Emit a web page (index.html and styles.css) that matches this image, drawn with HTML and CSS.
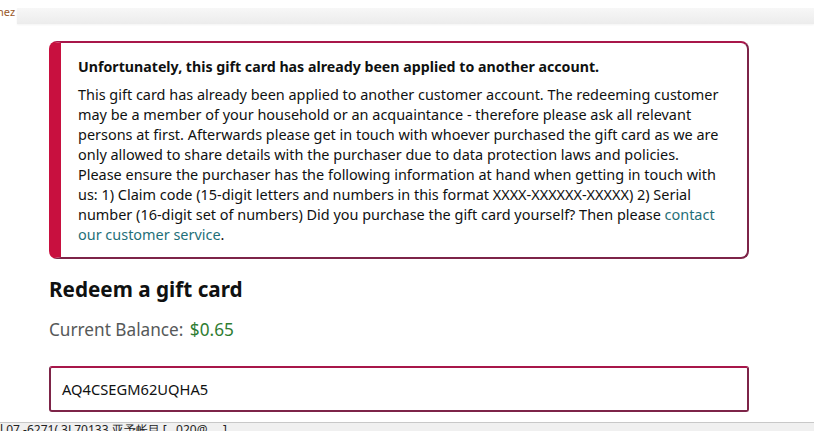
FILE: index.html
```html
<!DOCTYPE html>
<html>
<head>
<meta charset="utf-8">
<link rel="stylesheet" href="styles.css">
</head>
<body>
<div class="topbar">
  <span class="tab">nez</span>
  <div class="strip"></div>
</div>
<main class="main">
  <div class="alert">
    <div class="alert-inner">
      <h4 class="alert-title">Unfortunately, this gift card has already been applied to another account.</h4>
      <p class="alert-text">This gift card has already been applied to another customer account. The redeeming customer may be a member of your household or an acquaintance - therefore please ask all relevant persons at first. Afterwards please get in touch with whoever purchased the gift card as we are only allowed to share details with the purchaser due to data protection laws and policies. Please ensure the purchaser has the following information at hand when getting in touch with us: 1) Claim code (15-digit letters and numbers in this format XXXX-XXXXXX-XXXXX) 2) Serial number (16-digit set of numbers) Did you purchase the gift card yourself? Then please <a class="link" href="#">contact our customer service</a>.</p>
    </div>
  </div>
  <h2 class="heading">Redeem a gift card</h2>
  <div class="balance">Current Balance: <span class="amount">$0.65</span></div>
  <div class="input">AQ4CSEGM62UQHA5</div>
</main>
<div class="statusbar">l 07 -6271( 3L70133 亚予帐目 [ &nbsp; 020@ &nbsp; &nbsp; ]</div>
</body>
</html>
```

FILE: styles.css
```css
html, body {
  margin: 0;
  padding: 0;
  background: #fff;
  height: 431px;
  overflow: hidden;
  font-family: "Noto Sans", "Open Sans", sans-serif;
  color: #0f1111;
}
.topbar {
  height: 26px;
  position: relative;
  display: flex;
  align-items: flex-start;
}
.tab {
  font-size: 11px;
  color: #9a5a2a;
  padding-top: 5px;
  line-height: 14px;
  margin-left: -3px;
  width: 20px;
}
.strip {
  flex: 1;
  height: 16px;
  margin-top: 8px;
  background: linear-gradient(#f7f7f7, #ececec);
  box-shadow: 0 1px 2px rgba(0,0,0,0.05);
}
.main {
  padding: 15px 0 0 49px;
  width: 700px;
}
.alert {
  border: 2px solid #7d2448;
  border-top-color: #a8164a;
  border-left: 12px solid #c8103f;
  border-radius: 8px;
  box-sizing: border-box;
  width: 700px;
  height: 218px;
}
.alert-inner {
  padding: 14px 24px 0 17px;
}
.alert-title {
  margin: 0;
  font-size: 14.2px;
  font-weight: 700;
  line-height: 20px;
}
.alert-text {
  margin: 8px 0 0;
  font-size: 14.45px;
  line-height: 20px;
  color: #0f1111;
}
.link {
  color: #1f6f78;
  text-decoration: none;
}
.heading {
  margin: 16px 0 0;
  font-size: 20.7px;
  line-height: 28px;
  font-weight: 700;
}
.balance {
  margin-top: 15px;
  font-size: 17.2px;
  line-height: 24px;
  color: #565959;
}
.amount {
  color: #2f7d32;
  margin-left: 2px;
}
.input {
  margin-top: 24px;
  box-sizing: border-box;
  width: 700px;
  height: 46px;
  border: 2px solid #7d2448;
  border-top-color: #a8164a;
  border-radius: 3px;
  padding: 0 0 0 11px;
  display: flex;
  align-items: center;
  font-size: 14.7px;
}
.statusbar {
  position: absolute;
  left: 0;
  top: 422px;
  width: 814px;
  height: 20px;
  background: #f0f0f0;
  border-top: 1px solid #c8c8c8;
  font-size: 12px;
  line-height: 14px;
  color: #222;
  white-space: nowrap;
  overflow: hidden;
}
```
